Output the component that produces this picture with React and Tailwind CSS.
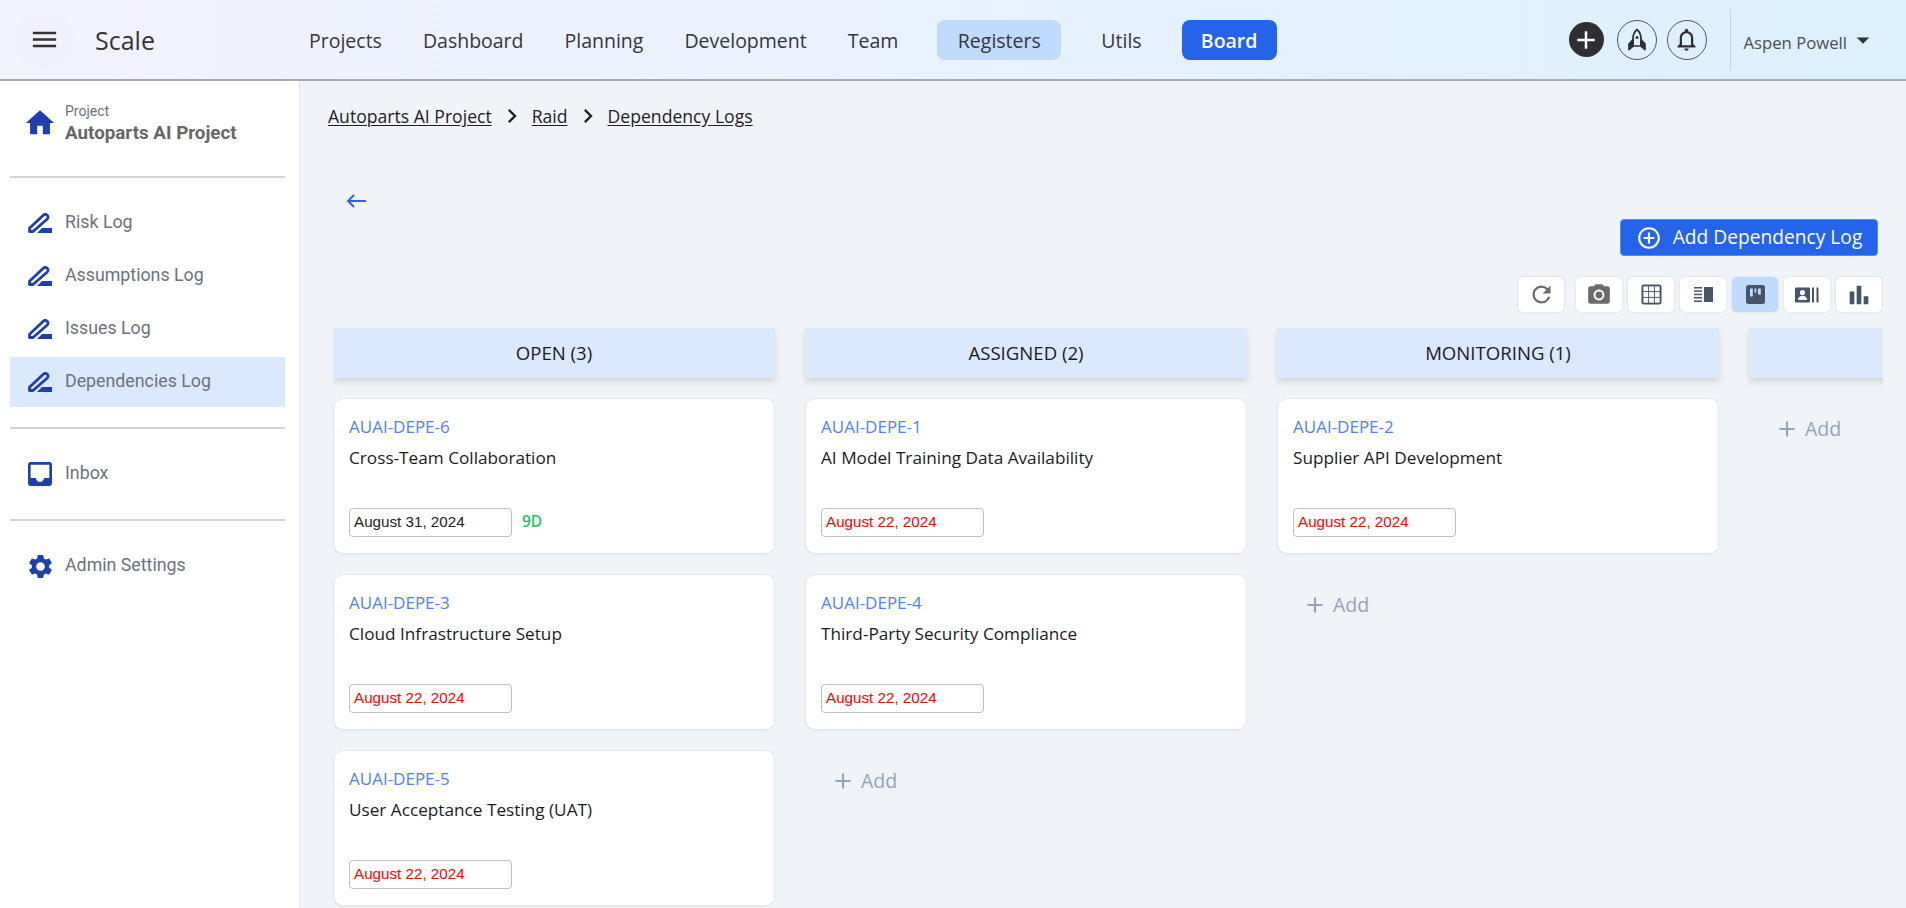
import React from "react";
import {
  MdMenu, MdHome, MdInbox, MdSettings, MdAdd, MdOutlineNotifications,
  MdRefresh, MdCameraAlt, MdBarChart, MdKeyboardArrowRight, MdArrowDropDown, MdAddCircleOutline,
} from "react-icons/md";

const SANS = "font-['Open_Sans','Noto_Sans',sans-serif]";

function PenIcon() {
  return (
    <svg viewBox="0 0 24 20" className="w-[24px] h-[20px] shrink-0" fill="none">
      <path d="M1.500 18.500v-3.200L15 2.500c1.500-1.400 3-1.400 4.200-.3 1.200 1.200 1.200 2.700-.2 4.100L5 18.500z" stroke="#1e40af" strokeWidth="2.800" strokeLinejoin="round" />
      <path d="M14 15h10v5H9z" fill="#1e40af" />
    </svg>
  );
}

function Rocket() {
  return (
    <svg viewBox="0 0 24 24" className="w-[24px] h-[24px]" fill="none" stroke="#2f2f33" strokeWidth="1.700" strokeLinejoin="round">
      <path d="M12 1.500c-2.800 2.500-4 5.500-4 9v7.500h8v-7.500c0-3.500-1.200-6.500-4-9z" />
      <path d="M8 11.500 4 16v5.500l4-3.500zM16 11.500l4 4.500v5.500l-4-3.500z" fill="#2f2f33" />
      <circle cx="12" cy="9.500" r="1.500" fill="#2f2f33" stroke="none" />
    </svg>
  );
}

function GridIcon() {
  return (
    <svg viewBox="0 0 22 22" className="w-[21px] h-[21px]">
      <rect x="0.500" y="0.500" width="21" height="21" rx="2.500" fill="#475569" />
      {[2.500, 8.500, 14.500].map((x) =>
        [2.500, 8.500, 14.500].map((y) => <rect key={x + "-" + y} x={x} y={y} width="5" height="5" fill="#fff" />)
      )}
    </svg>
  );
}

function SplitIcon() {
  return (
    <svg viewBox="0 0 19 15" className="w-[19px] h-[15px]" fill="#475569">
      <rect x="0" y="0" width="8" height="1.500" />
      <rect x="0" y="3.300" width="8" height="1.500" />
      <rect x="0" y="6.700" width="8" height="1.500" />
      <rect x="0" y="10" width="8" height="1.500" />
      <rect x="0" y="13.500" width="8" height="1.500" />
      <rect x="10" y="0" width="9" height="15" />
    </svg>
  );
}

function KanbanIcon() {
  return (
    <svg viewBox="0 0 19 19" className="w-[19px] h-[19px]">
      <rect width="19" height="19" rx="2.500" fill="#475569" />
      <rect x="4" y="3.500" width="2.800" height="8" fill="#bfdbfe" />
      <rect x="8.500" y="3.500" width="1.800" height="4" fill="#bfdbfe" />
      <rect x="12" y="3.500" width="2.800" height="6" fill="#bfdbfe" />
    </svg>
  );
}

function ContactIcon() {
  return (
    <svg viewBox="0 0 24 16" className="w-[24px] h-[16px]" fill="#475569">
      <rect x="0" y="0.500" width="15" height="15" rx="1" />
      <circle cx="7.500" cy="5.500" r="2.600" fill="#fff" />
      <path d="M2.800 13c.4-3 2.400-4.200 4.700-4.200s4.300 1.200 4.700 4.200z" fill="#fff" />
      <rect x="17" y="0.500" width="2" height="15" />
      <rect x="21.500" y="0.500" width="2" height="15" />
    </svg>
  );
}

function NavItem({ icon, label, active }) {
  return (
    <div className={`flex items-center h-[50px] pl-[18px] gap-[13px] ${active ? "bg-[#dbe9fe]" : ""}`}>
      {icon}
      <span className="text-[#6b7280] text-[17.800px] font-['Roboto',sans-serif] leading-none -mt-[2px]">{label}</span>
    </div>
  );
}

function Divider({ className = "" }) {
  return <div className={`h-[2px] bg-[#d1d5db] ${className}`} />;
}

function Sidebar() {
  return (
    <aside className="w-[300px] shrink-0 bg-white border-r border-[#e2e5ea] pl-[10px] pr-[14px] flex flex-col">
      <div className="flex items-start pl-[18px] gap-[13px] pt-[22px] h-[95px]">
        <span className="w-[24px] h-[34px] mt-[3px] flex justify-center shrink-0">
          <MdHome className="text-[#1e40af] w-[34px] h-[34px] shrink-0" />
        </span>
        <div className="font-['Roboto',sans-serif]">
          <div className="text-[14px] leading-[17px] text-[#6b7280]">Project</div>
          <div className="text-[18.800px] leading-[26px] font-bold text-[#666666]">Autoparts AI Project</div>
        </div>
      </div>
      <Divider />
      <div className="flex flex-col gap-[3px] mt-[20px]">
        <NavItem icon={<PenIcon />} label="Risk Log" />
        <NavItem icon={<PenIcon />} label="Assumptions Log" />
        <NavItem icon={<PenIcon />} label="Issues Log" />
        <NavItem icon={<PenIcon />} label="Dependencies Log" active />
      </div>
      <Divider className="mt-[20px]" />
      <div className="mt-[20px]">
        <NavItem
          label="Inbox"
          icon={<span className="w-[24px] flex justify-center shrink-0"><MdInbox className="text-[#1e40af] w-[32px] h-[32px] shrink-0" /></span>}
        />
      </div>
      <Divider className="mt-[20px]" />
      <div className="mt-[20px]">
        <NavItem
          label="Admin Settings"
          icon={<span className="w-[24px] flex justify-center shrink-0"><MdSettings className="text-[#1e40af] w-[29px] h-[29px] shrink-0" /></span>}
        />
      </div>
    </aside>
  );
}

function Header() {
  const links = ["Projects", "Dashboard", "Planning", "Development", "Team"];
  return (
    <header className={`h-[81px] shrink-0 flex items-center bg-linear-to-r from-[#f3f3fe] to-[#dcf0fe] border-b-2 border-[#a9adb3] ${SANS} text-[#35363a]`}>
      <div className="w-[58px] h-[60px] ml-[15px] rounded-full bg-[#f1f2fd] flex items-center justify-center">
        <MdMenu className="w-[31px] h-[31px] text-[#333]" />
      </div>
      <span className="ml-[22px] text-[25px] w-[214px] pt-[2px]">Scale</span>
      <nav className="flex items-center text-[19.500px]">
        <div className="flex items-center gap-[41px] pt-[3px]">
          {links.map((l) => <span key={l}>{l}</span>)}
        </div>
        <span className="ml-[39px] h-[40px] w-[124px] pt-[3px] flex items-center justify-center rounded-[8px] bg-[#bfdbfe]">Registers</span>
        <span className="ml-[40px] pt-[3px]">Utils</span>
        <span className="ml-[40px] h-[40px] w-[95px] pt-[3px] flex items-center justify-center rounded-[8px] bg-[#2563eb] text-white font-semibold">Board</span>
      </nav>
      <div className="ml-auto flex items-center h-[60px]">
        <span className="w-[35px] h-[35px] rounded-full bg-[#2f2f33] flex items-center justify-center">
          <MdAdd className="text-white w-[30px] h-[30px]" />
        </span>
        <span className="ml-[13px] w-[40px] h-[40px] rounded-full border border-[#4a5568] flex items-center justify-center"><Rocket /></span>
        <span className="ml-[10px] w-[40px] h-[40px] rounded-full border border-[#4a5568] flex items-center justify-center">
          <MdOutlineNotifications className="w-[27px] h-[27px] text-[#2f2f33]" />
        </span>
        <span className="ml-[23px] h-[60px] w-px bg-[#bfd0df]" />
        <span className="ml-[13px] text-[16.700px] text-[#4a4d52] pt-[6px]">Aspen Powell</span>
        <MdArrowDropDown className="w-[30px] h-[30px] text-[#333] ml-[1px] mr-[28px]" />
      </div>
    </header>
  );
}

function IconBtn({ active, className = "", children }) {
  return (
    <button className={`w-[46px] h-[35px] rounded-[5px] shadow-[0_0_2px_rgba(0,0,0,0.15)] flex items-center justify-center ${active ? "bg-[#bfdbfe]" : "bg-white"} ${className}`}>
      {children}
    </button>
  );
}

function Toolbar() {
  return (
    <div className="flex justify-end items-center gap-[6px] mt-[21px] pr-[1px]">
      <IconBtn className="mr-[6px]"><MdRefresh className="w-[27px] h-[27px] text-[#6b6b6b]" /></IconBtn>
      <IconBtn><MdCameraAlt className="w-[26px] h-[26px] text-[#6b6b6b]" /></IconBtn>
      <IconBtn><GridIcon /></IconBtn>
      <IconBtn><SplitIcon /></IconBtn>
      <IconBtn active><KanbanIcon /></IconBtn>
      <IconBtn><ContactIcon /></IconBtn>
      <IconBtn><MdBarChart className="w-[28px] h-[28px] text-[#475569]" /></IconBtn>
    </div>
  );
}

function Card({ id, title, date, late, tag }) {
  return (
    <div className={`h-[156px] shrink-0 bg-white rounded-[10px] border border-[#e5e7eb] shadow-[0_1px_2px_rgba(0,0,0,0.05)] px-[15px] pt-[16px] pb-[16px] flex flex-col ${SANS}`}>
      <div className="text-[17px] leading-[24px] font-medium text-[#4f82f7]">{id}</div>
      <div className="text-[17.200px] leading-[24px] mt-[7px] text-[#1a1b1f] font-medium">{title}</div>
      <div className="flex items-center mt-auto">
        <div className={`w-[163px] h-[29px] rounded-[4px] border border-[#bdbdbd] pl-[4px] flex items-center text-[15.200px] font-['Liberation_Sans',sans-serif] ${late ? "text-[#ff0000]" : "text-[#222]"}`}>{date}</div>
        {tag && <span className="ml-[10px] text-[15.500px] font-semibold text-[#22c55e] -mt-[2px]">{tag}</span>}
      </div>
    </div>
  );
}

function AddRow() {
  return (
    <div className={`flex items-center h-[24px] pl-[25px] text-[19.500px] text-[#94a3b8] ${SANS}`}>
      <MdAdd className="w-[26px] h-[26px] mr-[5px]" />Add
    </div>
  );
}

function Column({ title, cards, noAdd }) {
  return (
    <div className="w-[442px] shrink-0 flex flex-col">
      <div className={`h-[50px] shrink-0 bg-[#dbe9fe] shadow-[0_4px_6px_rgba(0,0,0,0.12)] flex items-center justify-center text-[18.600px] font-medium text-[#1a1b1f] ${SANS}`}>{title}</div>
      {cards.length > 0 && (
        <div className="flex flex-col gap-[20px] mt-[20px]">
          {cards.map((c) => <Card key={c.id} {...c} />)}
        </div>
      )}
      {!noAdd && <div className="mt-[39px]"><AddRow /></div>}
    </div>
  );
}

const D22 = "August 22, 2024";

export default function App() {
  return (
    <div className="w-[1906px] h-[908px] overflow-hidden flex flex-col bg-[#f0f4f9]">
      <Header />
      <div className="flex flex-1 min-h-0">
        <Sidebar />
        <main className={`flex-1 min-w-0 pl-[33px] pr-[23px] flex flex-col ${SANS}`}>
          <div className="flex items-center mt-[23px] -ml-[5px] h-[24px] text-[17.600px] text-[#1f2024] font-medium">
            <span className="underline underline-offset-2">Autoparts AI Project</span>
            <MdKeyboardArrowRight className="w-[28px] h-[28px] mx-[6px]" />
            <span className="underline underline-offset-2">Raid</span>
            <MdKeyboardArrowRight className="w-[28px] h-[28px] mx-[6px]" />
            <span className="underline underline-offset-2">Dependency Logs</span>
          </div>
          <div className="mt-[61px] ml-[13px] h-[24px] flex items-center">
            <svg viewBox="0 0 20 14" className="w-[20px] h-[14px]" fill="none" stroke="#2563eb" strokeWidth="1.800">
              <path d="M20 7H2M8 1 2 7l6 6" />
            </svg>
          </div>
          <div className="flex justify-end mt-[6px] pr-[5px]">
            <button className="h-[37px] w-[258px] rounded-[4px] bg-[#2563eb] border border-[#3b9bf0] text-white text-[19.200px] flex items-center justify-center gap-[11px]">
              <MdAddCircleOutline className="w-[26px] h-[26px]" />Add Dependency Log
            </button>
          </div>
          <Toolbar />
          <div className="flex gap-[30px] mt-[16px] overflow-hidden flex-1 min-h-0 pb-[6px]">
            <Column noAdd title="OPEN (3)" cards={[
              { id: "AUAI-DEPE-6", title: "Cross-Team Collaboration", date: "August 31, 2024", tag: "9D" },
              { id: "AUAI-DEPE-3", title: "Cloud Infrastructure Setup", date: D22, late: true },
              { id: "AUAI-DEPE-5", title: "User Acceptance Testing (UAT)", date: D22, late: true },
            ]} />
            <Column title="ASSIGNED (2)" cards={[
              { id: "AUAI-DEPE-1", title: "AI Model Training Data Availability", date: D22, late: true },
              { id: "AUAI-DEPE-4", title: "Third-Party Security Compliance", date: D22, late: true },
            ]} />
            <Column title="MONITORING (1)" cards={[
              { id: "AUAI-DEPE-2", title: "Supplier API Development", date: D22, late: true },
            ]} />
            <Column title="" cards={[]} />
          </div>
        </main>
      </div>
    </div>
  );
}
